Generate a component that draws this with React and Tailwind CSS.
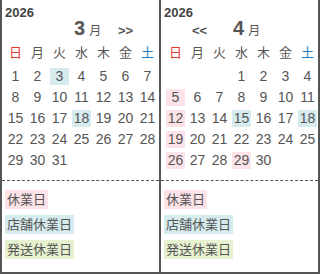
const WEEK = [
  { label: "日", color: "text-[#e53935]" },
  { label: "月", color: "text-[#555]" },
  { label: "火", color: "text-[#555]" },
  { label: "水", color: "text-[#555]" },
  { label: "木", color: "text-[#555]" },
  { label: "金", color: "text-[#555]" },
  { label: "土", color: "text-[#1f7cc4]" },
];

const MARK = {
  off: "bg-[#fbe3e8]",
  shop: "bg-[#d5ebee]",
  ship: "bg-[#e6f2cf]",
};

function buildDays(offset, total, marks) {
  const cells = [];
  for (let i = 0; i < offset; i++) cells.push(null);
  for (let d = 1; d <= total; d++) cells.push({ d, mark: marks[d] });
  return cells;
}

function Calendar({ month, days, prev, next, border, pad }) {
  return (
    <div className={`w-[160px] h-[274px] shrink-0 border-[#555] border-b-2 ${border}`}>
      <div className="h-[18px] pt-[5px] pl-[3px] text-[13px] leading-[15px] font-bold text-[#444]">2026</div>
      <div className="flex items-baseline h-[24px] leading-[20px] font-bold text-[#555]">
        <div className="w-[70px] pl-[31px] text-[13px]">{prev ? "<<" : ""}</div>
        <div className="w-[46px] pl-[2px]">
          <span className="text-[20px]">{month}</span>
          <span className="ml-[4px] text-[12px] font-normal">月</span>
        </div>
        <div className="text-[13px]">{next ? ">>" : ""}</div>
      </div>
      <div className={pad}>
        <div className="mt-[2px] grid grid-cols-[repeat(7,19px)] gap-x-[3px] h-[17px] leading-[17px] text-[13px] text-center">
          {WEEK.map((w) => (
            <div key={w.label} className={w.color}>{w.label}</div>
          ))}
        </div>
        <div className="mt-[7px] grid grid-cols-[repeat(7,19px)] auto-rows-[17px] gap-x-[3px] gap-y-[4px] text-[14px] leading-[17px] text-center text-[#555]">
          {days.map((c, i) =>
            c ? (
              <div key={i} className={c.mark ? MARK[c.mark] : ""}>{c.d}</div>
            ) : (
              <div key={i} />
            )
          )}
        </div>
      </div>
      <div className="mt-[11px] border-t border-dashed border-[#555]" />
      <div className="pl-[3px] pt-[9px] flex flex-col items-start gap-[6px] text-[13px] leading-[19px] text-[#555]">
        <div className={`${MARK.off} px-[2px]`}>休業日</div>
        <div className={`${MARK.shop} px-[2px]`}>店舗休業日</div>
        <div className={`${MARK.ship} px-[2px]`}>発送休業日</div>
      </div>
    </div>
  );
}

export default function App() {
  const march = buildDays(0, 31, { 3: "shop", 18: "shop" });
  const april = buildDays(3, 30, {
    5: "off",
    12: "off",
    19: "off",
    26: "off",
    29: "off",
    15: "shop",
    18: "shop",
  });
  return (
    <div
      className="flex w-[320px] h-[274px] bg-white"
      style={{ fontFamily: '"Liberation Sans", "Noto Sans CJK JP", sans-serif' }}
    >
      <Calendar month="3" days={march} next border="border-l-2 border-r" pad="pl-[4px]" />
      <Calendar month="4" days={april} prev border="border-l border-r-2" pad="pl-[5px]" />
    </div>
  );
}
